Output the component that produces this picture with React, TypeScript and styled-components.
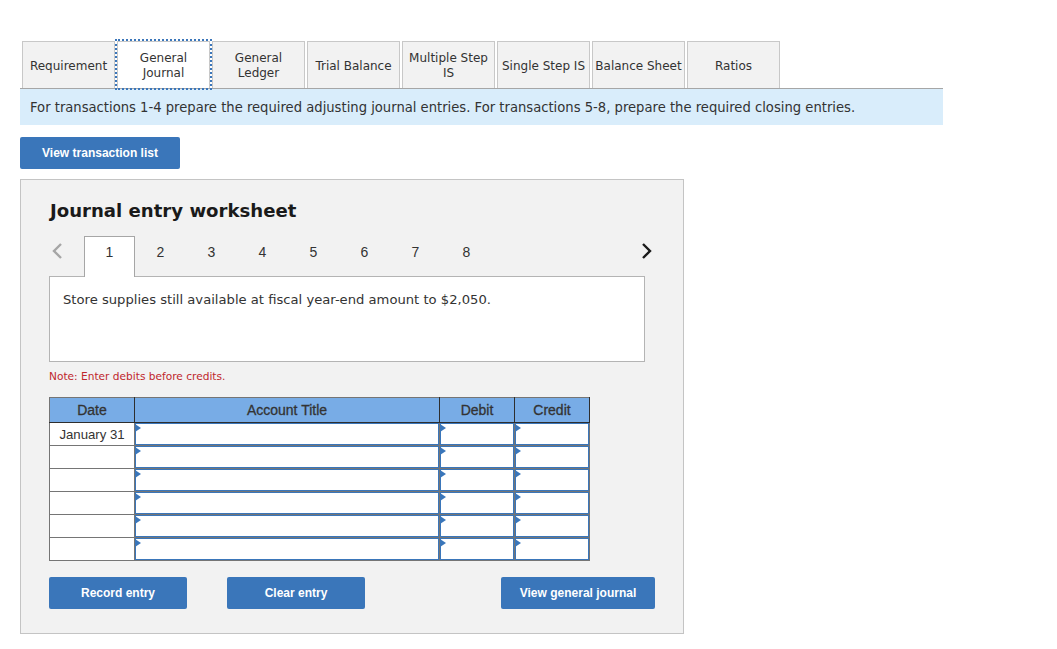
import styled, { createGlobalStyle } from "styled-components";

const TABS = [
  "Requirement",
  "General Journal",
  "General Ledger",
  "Trial Balance",
  "Multiple Step IS",
  "Single Step IS",
  "Balance Sheet",
  "Ratios",
];
const STEPS = [1, 2, 3, 4, 5, 6, 7, 8];
const ROWS = ["January 31", "", "", "", "", ""];

const VERDANA = `"DejaVu Sans", Verdana, sans-serif`;
const ARIAL = `"Liberation Sans", Arial, sans-serif`;

const GlobalStyle = createGlobalStyle`
  html, body {
    margin: 0;
    padding: 0;
    background: #fff;
    font-family: ${ VERDANA };
  }
`;

const Page = styled.div`
  padding: 41px 0 0 20px;
  width: 923px;
`;

const TabBar = styled.div`
  display: flex;
  gap: 2px;
  padding-left: 2px;
  height: 47px;
  border-bottom: 1px solid #a6a6a6;
  width: 921px;
`;

const Tab = styled.div<{ $active?: boolean }>`
  position: relative;
  width: 93px;
  height: 47px;
  box-sizing: border-box;
  border: 1px solid #c8c8c8;
  border-bottom: none;
  background: ${ p => p.$active ? "#fff" : "#f2f2f2" };
  color: #333;
  font-size: 12px;
  line-height: 15px;
  display: flex;
  align-items: center;
  justify-content: center;
  text-align: center;
  padding: 2px 2px 0;
  ${ p => p.$active && `
    outline: 2px dotted #3b76ba;
    outline-offset: 0;
    z-index: 1;
  ` }
`;

const Banner = styled.div`
  height: 36px;
  background: #d9edfb;
  color: #333;
  font-size: 13.17px;
  line-height: 37px;
  padding-left: 10px;
  white-space: nowrap;
`;

const Button = styled.button<{ $width: number }>`
  width: ${ p => p.$width }px;
  height: 32px;
  background: #3a76ba;
  border: none;
  border-radius: 2px;
  color: #fff;
  font-family: ${ ARIAL };
  font-size: 12px;
  font-weight: 700;
  padding: 0;
  display: block;
`;

const TopAction = styled.div`
  margin-top: 12px;
`;

const Panel = styled.div`
  margin-top: 10px;
  width: 664px;
  height: 455px;
  box-sizing: border-box;
  background: #f2f2f2;
  border: 1px solid #c4c4c4;
  padding: 20px 28px 0;
`;

const Title = styled.h2`
  margin: 0 0 0 1px;
  color: #1a1a1a;
  font-size: 18.1px;
  font-weight: 700;
  line-height: 22px;
  white-space: nowrap;
`;

const StepBar = styled.div`
  display: flex;
  align-items: stretch;
  height: 41px;
  margin-top: 14px;
  width: 606px;
  position: relative;
  z-index: 1;
`;

const Chevron = styled.div`
  width: 16px;
  height: 30px;
  display: flex;
  align-items: center;
  justify-content: center;
`;

const Step = styled.div<{ $active?: boolean }>`
  width: 51px;
  box-sizing: border-box;
  height: ${ p => p.$active ? "41px" : "32px" };
  padding-top: 8px;
  text-align: center;
  font-family: ${ ARIAL };
  font-size: 14px;
  line-height: 14px;
  color: #333;
  background: ${ p => p.$active ? "#fff" : "transparent" };
  border: ${ p => p.$active ? "1px solid #a6a6a6" : "1px solid transparent" };
  border-bottom: none;
`;

const Steps = styled.div`
  display: flex;
  flex: 1;
  margin-left: 19px;
`;

const Description = styled.div`
  width: 596px;
  height: 86px;
  margin-top: -1px;
  box-sizing: border-box;
  background: #fff;
  border: 1px solid #b4b4b4;
  padding: 14px 13px;
  color: #333;
  font-size: 13.15px;
  line-height: 17px;
  white-space: nowrap;
`;

const Note = styled.div`
  margin-top: 8px;
  color: #c0272d;
  font-size: 10.6px;
  line-height: 13px;
`;

const Sheet = styled.table`
  margin-top: 14px;
  border-collapse: collapse;
  table-layout: fixed;
  width: 541px;
  font-family: ${ ARIAL };
  font-size: 13.2px;
  color: #333;
  border: 1px solid #757575;
`;

const HeadCell = styled.th<{ $width: number }>`
  box-sizing: border-box;
  width: ${ p => p.$width }px;
  height: 25px;
  padding: 0;
  background: #78ace6;
  font-size: 14px;
  font-weight: 400;
  text-align: center;
  -webkit-text-stroke: 0.3px #333;
  border-right: 1px solid #2e2e2e;
  border-bottom: 1px solid #2e2e2e;
`;

const DateCell = styled.td`
  box-sizing: border-box;
  height: 23px;
  padding: 0;
  background: #fff;
  text-align: center;
  border-right: 1px solid #757575;
  border-bottom: 1px solid #757575;
`;

const EntryCell = styled.td`
  position: relative;
  box-sizing: border-box;
  height: 23px;
  padding: 0;
  background: #fff;
  box-shadow: inset 0 0 0 1px #3a76ba;
  border-right: 1px solid #757575;
  border-bottom: 1px solid #757575;

  &::before {
    content: "";
    position: absolute;
    left: 0;
    top: 1px;
    border-left: 6px solid #3a76ba;
    border-top: 4px solid transparent;
    border-bottom: 4px solid transparent;
  }
`;

const Actions = styled.div`
  display: flex;
  margin-top: 16px;
  width: 606px;
`;

const ClearSlot = styled.div`
  margin-left: 40px;
  margin-right: 136px;
`;

const ChevronIcon = ({ dir, color }: { dir: "left" | "right", color: string }) => (
  <svg width="12" height="18" viewBox="0 0 12 18" fill="none">
    <path
      d={ dir === "left" ? "M10 2 L3 9 L10 16" : "M2 2 L9 9 L2 16" }
      stroke={ color }
      strokeWidth="2.4"
    />
  </svg>
);

export default function App() {
  return (
    <Page>
      <GlobalStyle/>
      <TabBar>
        { TABS.map((tab, i) => <Tab key={ tab } $active={ i === 1 }>{ tab }</Tab>) }
      </TabBar>
      <Banner>
        For transactions 1-4 prepare the required adjusting journal entries. For transactions 5-8, prepare the required closing entries.
      </Banner>
      <TopAction>
        <Button $width={ 160 }>View transaction list</Button>
      </TopAction>

      <Panel>
        <Title>Journal entry worksheet</Title>
        <StepBar>
          <Chevron><ChevronIcon dir="left" color="#a6a6a6"/></Chevron>
          <Steps>
            { STEPS.map(step => <Step key={ step } $active={ step === 1 }>{ step }</Step>) }
          </Steps>
          <Chevron><ChevronIcon dir="right" color="#1a1a1a"/></Chevron>
        </StepBar>
        <Description>Store supplies still available at fiscal year-end amount to $2,050.</Description>
        <Note>Note: Enter debits before credits.</Note>

        <Sheet>
          <thead>
            <tr>
              <HeadCell $width={ 85 }>Date</HeadCell>
              <HeadCell $width={ 305 }>Account Title</HeadCell>
              <HeadCell $width={ 75 }>Debit</HeadCell>
              <HeadCell $width={ 75 }>Credit</HeadCell>
            </tr>
          </thead>
          <tbody>
            { ROWS.map((date, i) => (
              <tr key={ i }>
                <DateCell>{ date }</DateCell>
                <EntryCell/>
                <EntryCell/>
                <EntryCell/>
              </tr>
            )) }
          </tbody>
        </Sheet>

        <Actions>
          <Button $width={ 138 }>Record entry</Button>
          <ClearSlot><Button $width={ 138 }>Clear entry</Button></ClearSlot>
          <Button $width={ 154 }>View general journal</Button>
        </Actions>
      </Panel>
    </Page>
  );
}
